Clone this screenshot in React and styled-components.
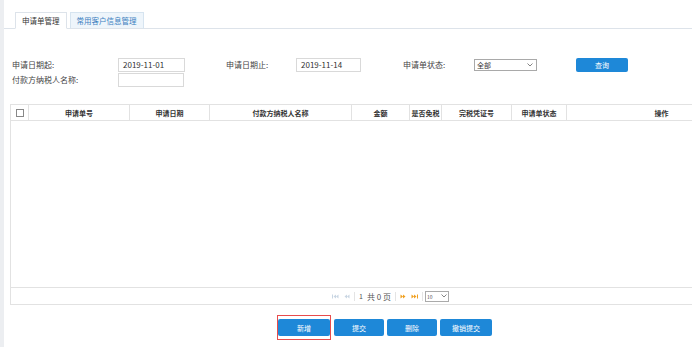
import React from 'react'
import styled, { createGlobalStyle } from 'styled-components'

const Global = createGlobalStyle`
  body {
    margin: 0;
    background: #fff;
    font-family: "Noto Sans CJK SC", "Liberation Sans", sans-serif;
    color: #333;
  }
`

const Page = styled.div`
  display: flex;
  width: 692px;
  height: 347px;
  overflow: hidden;
`
const Strip = styled.div`
  width: 4px;
  background: #eceef1;
  flex-shrink: 0;
`
const Main = styled.div`
  flex: 1;
  min-width: 0;
  display: flex;
  flex-direction: column;
  padding-top: 12px;
`
const TabBar = styled.div`
  display: flex;
  gap: 3px;
  padding-left: 11px;
  border-bottom: 1px solid #dde3ea;
  height: 16px;
`
const Tab = styled.div`
  height: 17px;
  box-sizing: border-box;
  padding: 0 6px;
  font-size: 7.5px;
  line-height: 15px;
  border: 1px solid ${p => (p.$active ? '#dde3ea' : '#d6e4f0')};
  border-bottom: ${p => (p.$active ? '1px solid #fff' : '1px solid #dde3ea')};
  background: ${p => (p.$active ? '#fff' : '#eef5fb')};
  color: ${p => (p.$active ? '#333' : '#3d7fbf')};
`
const Form = styled.div`
  display: grid;
  grid-template-columns: 106px 108px 70px 107px 71px 102px auto;
  grid-auto-rows: 14px;
  row-gap: 1px;
  align-items: center;
  margin-top: 29px;
  padding-left: 8px;
  font-size: 8px;
`
const Label = styled.div`
  color: #444;
  line-height: 14px;
`
const Input = styled.div`
  width: ${p => p.$w || 67}px;
  height: 14px;
  box-sizing: border-box;
  border: 1px solid #d9d9d9;
  padding-left: 4px;
  font-size: 8px;
  line-height: 12px;
  color: #333;
`
const Select = styled.div`
  width: 63px;
  height: 12px;
  box-sizing: border-box;
  border: 1px solid #a9a9a9;
  display: flex;
  align-items: center;
  justify-content: space-between;
  padding: 0 3px 0 2px;
  font-size: 7px;
  color: #333;
`
const QueryBtn = styled.div`
  width: 52px;
  height: 14px;
  border-radius: 2px;
  background: #1e88d8;
  color: #fff;
  font-size: 7px;
  display: flex;
  align-items: center;
  justify-content: center;
`
const Table = styled.div`
  margin-top: 17px;
  margin-left: 6px;
  border: 1px solid #e2e2e2;
  border-right: none;
  display: flex;
  flex-direction: column;
  overflow: hidden;
`
const HeadRow = styled.div`
  display: grid;
  grid-template-columns: 17px 101px 80px 142px 58px 32px 70px 55px 190px;
  height: 15px;
  border-bottom: 1px solid #e2e2e2;
`
const Th = styled.div`
  font-size: 7px;
  font-weight: bold;
  color: #333;
  display: flex;
  align-items: center;
  justify-content: center;
  border-left: ${p => (p.$first ? 'none' : '1px solid #e2e2e2')};
`
const Check = styled.div`
  width: 6px;
  height: 6px;
  border: 1px solid #888;
`
const Body = styled.div`
  height: 166px;
  border-bottom: 1px solid #e2e2e2;
`
const Pager = styled.div`
  height: 16px;
  display: flex;
  align-items: center;
  justify-content: center;
  gap: 4px;
  font-size: 7px;
  color: #555;
  padding-left: 78px;
`
const Sep = styled.span`
  width: 1px;
  height: 9px;
  background: #e4e4e4;
`
const PageSel = styled.div`
  width: 20px;
  height: 9px;
  border: 1px solid #aaa;
  font-size: 5px;
  display: flex;
  align-items: center;
  justify-content: space-between;
  padding: 0 1px;
  margin-left: -2px;
`
const Actions = styled.div`
  display: flex;
  align-items: center;
  gap: 3px;
  margin-top: 10px;
  padding-left: 273px;
`
const Marked = styled.div`
  border: 1px solid #e84c4c;
  padding: 3px 0;
  display: flex;
`
const ActBtn = styled.div`
  width: ${p => p.$w || 50}px;
  height: 17px;
  border-radius: 2px;
  background: #1e88d8;
  color: #fff;
  font-size: 7px;
  display: flex;
  align-items: center;
  justify-content: center;
`

const cols = ['申请单号', '申请日期', '付款方纳税人名称', '金额', '是否免税', '完税凭证号', '申请单状态', '操作']

const Chevron = () => (
  <svg width="6" height="4" viewBox="0 0 6 4">
    <path d="M0.5 0.5 L3 3 L5.5 0.5" fill="none" stroke="#666" strokeWidth="0.8" />
  </svg>
)

const PagerArrow = ({ dir, edge, color }) => (
  <svg width="7" height="5" viewBox="0 0 7 5">
    {dir === 'left' ? (
      <>
        {edge && <rect x="0" y="0.5" width="1" height="4" fill={color} />}
        <path d="M1.5 2.5 L4 0.5 L4 4.5 Z M4 2.5 L6.5 0.5 L6.5 4.5 Z" fill={color} />
      </>
    ) : (
      <>
        <path d="M0.5 0.5 L3 2.5 L0.5 4.5 Z M3 0.5 L5.5 2.5 L3 4.5 Z" fill={color} />
        {edge && <rect x="6" y="0.5" width="1" height="4" fill={color} />}
      </>
    )}
  </svg>
)

const App = () => {
  return (
    <Page>
      <Global />
      <Strip />
      <Main>
        <TabBar>
          <Tab $active>申请单管理</Tab>
          <Tab>常用客户信息管理</Tab>
        </TabBar>
        <Form>
          <Label>申请日期起:</Label>
          <Input>2019-11-01</Input>
          <Label>申请日期止:</Label>
          <Input $w={65}>2019-11-14</Input>
          <Label>申请单状态:</Label>
          <Select>
            全部
            <Chevron />
          </Select>
          <QueryBtn>查询</QueryBtn>
          <Label>付款方纳税人名称:</Label>
          <Input $w={66} />
        </Form>
        <Table>
          <HeadRow>
            <Th $first>
              <Check />
            </Th>
            {cols.map(c => (
              <Th key={c}>{c}</Th>
            ))}
          </HeadRow>
          <Body />
          <Pager>
            <PagerArrow dir="left" edge color="#c9d6e3" />
            <PagerArrow dir="left" color="#c9d6e3" />
            <Sep />
            <span>1</span>
            <span style={{ fontSize: 8 }}>共 0 页</span>
            <Sep />
            <PagerArrow dir="right" color="#f0a020" />
            <PagerArrow dir="right" edge color="#f0a020" />
            <Sep />
            <PageSel>
              10
              <Chevron />
            </PageSel>
          </Pager>
        </Table>
        <Actions>
          <Marked>
            <ActBtn $w={52}>新增</ActBtn>
          </Marked>
          <ActBtn>提交</ActBtn>
          <ActBtn>删除</ActBtn>
          <ActBtn $w={52}>撤销提交</ActBtn>
        </Actions>
      </Main>
    </Page>
  )
}

export default App
